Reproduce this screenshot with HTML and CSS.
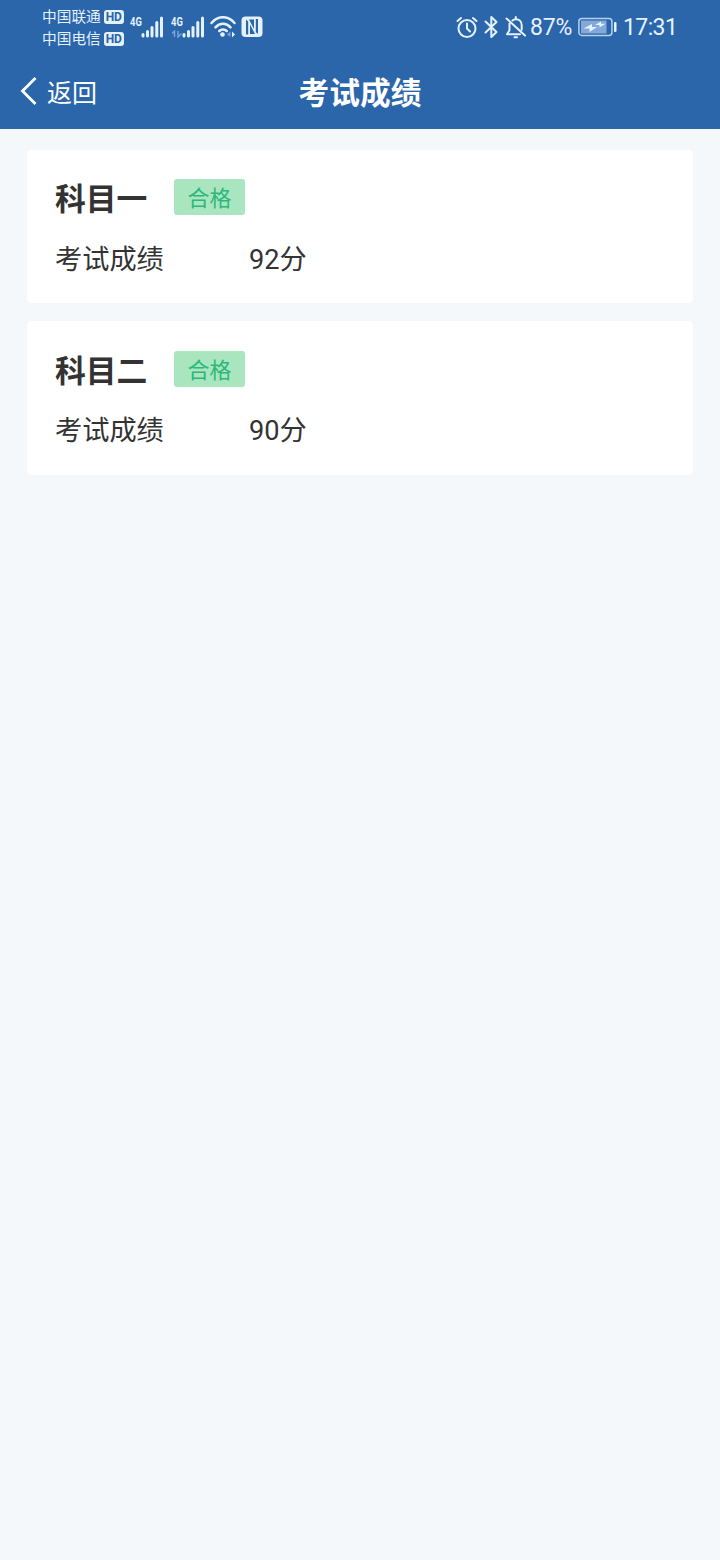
FILE: index.html
```html
<!DOCTYPE html>
<html lang="zh-CN">
<head>
    <meta charset="UTF-8">
    <meta name="viewport" content="width=device-width, initial-scale=1.0">
    <title>考试成绩</title>
    <link rel="stylesheet" href="styles.css">
</head>
<body>
    <header class="header">
        <div class="status">
            <div class="carriers">
                <div class="carrier">中国联通<span class="hd">HD</span></div>
                <div class="carrier">中国电信<span class="hd">HD</span></div>
            </div>
            <div class="signal">
                <span class="net">4G</span>
                <svg class="bars" width="23" height="22" viewBox="0 0 23 22">
                    <path d="M2 18.500v1.500M6.500 15.500V20M11 11.500V20M15.800 6.500V20M20.500 2V20"/>
                </svg>
            </div>
            <div class="signal second">
                <span class="net">4G</span>
                <svg class="bars" width="23" height="22" viewBox="0 0 23 22">
                    <path d="M2 18.500v1.500M6.500 15.500V20M11 11.500V20M15.800 6.500V20M20.500 2V20"/>
                </svg>
                <svg class="data" width="10" height="8" viewBox="0 0 10 8">
                    <path d="M0 3.500l2.500-2.500v6M6 1v6l3.500-3.500"/>
                </svg>
            </div>
            <svg class="wifi" width="26" height="22" viewBox="0 0 26 22">
                <path class="line" d="M1.500 7C8-.7 18-.7 24.500 7M5.500 11.300c4.200-4.600 10.800-4.600 15 0M9.300 15c2-2 5.400-2 7.400 0"/>
                <circle cx="12.500" cy="18.500" r="2.300"/>
                <path class="dim" d="M17 18.500l3.500-3v5.500z"/>
                <path d="M22 15.500v6l3-3z"/>
            </svg>
            <svg class="nfc" width="22" height="22" viewBox="0 0 22 22">
                <rect x=".5" y=".5" width="21" height="20.500" rx="4"/>
                <path d="M5 18.500V3.500L7.200 5.500V18.500zM9 8.500l5 9.500H9zM17 3v15l-2.200-2V3zM13 13L8 3.500h5z"/>
            </svg>
            <div class="status-right">
                <svg class="alarm line" width="22" height="23" viewBox="0 0 22 23">
                    <circle cx="11" cy="12.500" r="8.500"/>
                    <path d="M11 7.500v5l3 3M1.500 5L5 2M20.500 5L17 2"/>
                </svg>
                <svg class="bluetooth line" width="15" height="24" viewBox="0 0 15 24">
                    <path d="M1.500 6.500l11 10.500-5.200 5V2l5.200 5L1.500 17.500"/>
                </svg>
                <svg class="bell line" width="22" height="23" viewBox="0 0 22 23">
                    <path d="M1.500 2.500l18.500 17M4.500 7.500v6.800L2 18.200h13M7.500 4.500c1-1 2-1.300 3.300-1.300 3.700 0 5.900 2.500 5.900 6v4.500M10.800 1v2"/>
                    <path d="M9.500 21.200h2.500"/>
                </svg>
                <span class="percent">87%</span>
                <svg class="battery" width="39" height="20" viewBox="0 0 39 20">
                    <rect class="shell" x=".9" y="1.400" width="33" height="17" rx="3"/>
                    <rect class="level" x="3" y="3.500" width="25.500" height="13"/>
                    <path d="M5.500 11.500l8.500-4.500v3h5l-7.500 5v-3.500zM17 8l6-3.500v2.200h4.500L21.500 10.500V8z"/>
                    <rect x="36" y="5" width="2.500" height="10" rx="1"/>
                </svg>
                <span class="time">17:31</span>
            </div>
        </div>
        <div class="nav">
            <a class="back">
                <svg width="18" height="30" viewBox="0 0 18 30">
                    <path d="M16.500 2L3.500 15l13 13"/>
                </svg>
                <span>返回</span>
            </a>
            <h1 class="title">考试成绩</h1>
        </div>
    </header>
    <main class="list">
        <section class="card">
            <div class="card-head">
                <h2 class="subject">科目一</h2>
                <span class="tag">合格</span>
            </div>
            <div class="row">
                <span class="label">考试成绩</span>
                <span class="score">92分</span>
            </div>
        </section>
        <section class="card">
            <div class="card-head">
                <h2 class="subject">科目二</h2>
                <span class="tag">合格</span>
            </div>
            <div class="row">
                <span class="label">考试成绩</span>
                <span class="score">90分</span>
            </div>
        </section>
    </main>
</body>
</html>
```
FILE: styles.css
```css
*{
    box-sizing: border-box;
}
body{
    margin: 0;
    min-height: 1560px;
    background: #f4f8fa;
    color: #333;
    font-family: Roboto, "Noto Sans CJK SC", sans-serif;
}
svg{
    display: block;
    flex: none;
}
.header{
    height: 128.500px;
    background: #2b65aa;
    color: #fff;
}
.status{
    display: flex;
    align-items: flex-start;
    height: 56px;
    padding: 5px 43px 0 42px;
    color: #e4f2ff;
    fill: #e4f2ff;
}
.carriers{
    width: 88px;
    padding-top: 1px;
}
.carrier{
    display: flex;
    align-items: center;
    height: 22px;
    font-size: 14.700px;
    line-height: 22px;
    white-space: nowrap;
}
.hd{
    width: 20px;
    height: 14px;
    margin-left: 3px;
    border-radius: 3px;
    background: #e4f2ff;
    color: #2b65aa;
    font-size: 12px;
    font-weight: 700;
    line-height: 14px;
    text-align: center;
}
.signal{
    position: relative;
    display: flex;
    width: 41px;
    padding-top: 11px;
}
.second{
    width: 39px;
}
.net{
    width: 11px;
    font-size: 12.500px;
    font-weight: 700;
    line-height: 11px;
    transform: scaleX(.75);
    transform-origin: left;
}
.bars{
    fill: none;
    stroke: #e4f2ff;
    stroke-width: 3;
    stroke-linecap: round;
}
.data{
    position: absolute;
    left: 1px;
    top: 25px;
    fill: none;
    stroke: #7ba5d5;
    stroke-width: 1.500;
}
.wifi{
    margin-top: 11px;
}
.wifi .line{
    fill: none;
    stroke: #e4f2ff;
    stroke-width: 2.500;
    stroke-linecap: round;
}
.wifi .dim{
    fill: #7ba5d5;
}
.nfc{
    margin: 11px 0 0 5px;
}
.nfc path{
    fill: #2b65aa;
}
.status-right{
    display: flex;
    align-items: center;
    height: 44px;
    margin-left: auto;
}
.line{
    fill: none;
    stroke: #e4f2ff;
    stroke-width: 2;
    stroke-linecap: round;
    stroke-linejoin: round;
}
.bluetooth{
    margin-left: 6px;
}
.bell{
    margin: 0 3px 0 6px;
}
.percent{
    width: 48px;
    padding-top: 1px;
    font-size: 23px;
    letter-spacing: -.2px;
}
.battery .shell{
    fill: none;
    stroke: #b5d2f0;
    stroke-width: 1.500;
}
.battery .level{
    fill: #82a9d8;
}
.time{
    width: 54px;
    margin-left: 6px;
    padding-top: 1px;
    font-size: 23px;
    letter-spacing: -.6px;
}
.nav{
    position: relative;
    display: flex;
    align-items: center;
    justify-content: center;
    height: 72px;
    padding-bottom: 3px;
}
.back{
    position: absolute;
    left: 19px;
    top: 19px;
    display: flex;
    align-items: center;
    gap: 10px;
    height: 32px;
    font-size: 25px;
}
.back path{
    fill: none;
    stroke: #fff;
    stroke-width: 2.800;
}
.title{
    margin: 0;
    font-size: 30.700px;
    font-weight: 700;
}
.list{
    display: flex;
    flex-direction: column;
    gap: 18px;
    padding: 21px 27px;
}
.card{
    height: 153.500px;
    padding: 29px 28px;
    border-radius: 5px;
    background: #fff;
}
.card-head{
    display: flex;
    align-items: center;
    height: 37px;
}
.subject{
    width: 119px;
    margin: 0;
    padding-top: 5px;
    font-size: 30.800px;
    font-weight: 700;
    line-height: 37px;
}
.tag{
    width: 71px;
    height: 36px;
    border-radius: 3px;
    background: #a9e6c0;
    color: #2db77b;
    font-size: 22px;
    line-height: 39px;
    text-align: center;
}
.row{
    display: flex;
    margin-top: 25px;
    font-size: 27.200px;
    line-height: 38px;
}
.label{
    width: 194px;
}
```
